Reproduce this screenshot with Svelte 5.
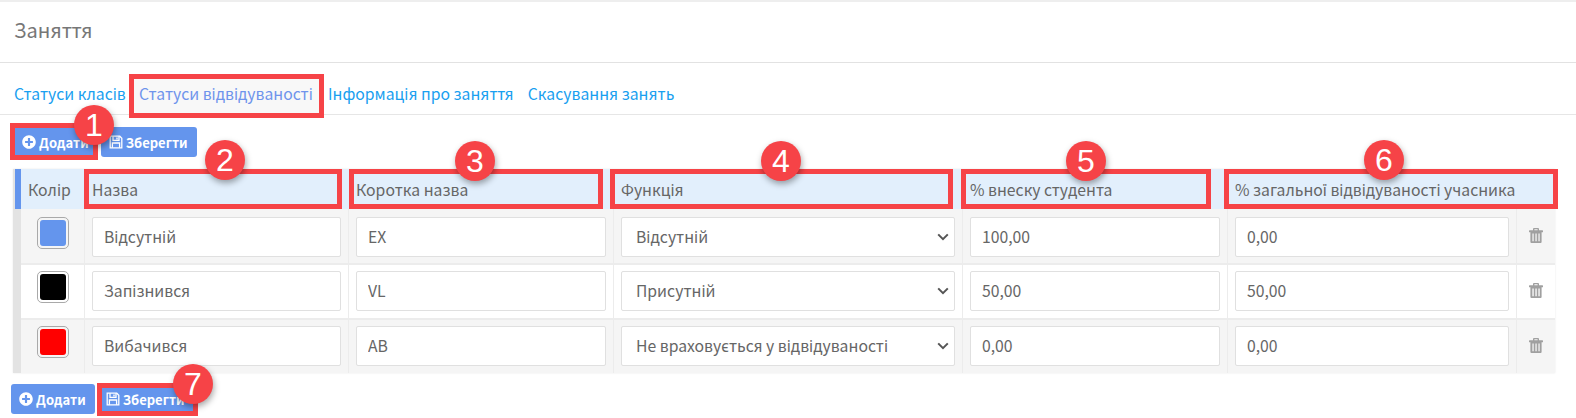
<script>
  const rows = [
    { color: '#6495ed', name: 'Відсутній', short: 'EX', fn: 'Відсутній', a: '100,00', b: '0,00' },
    { color: '#000000', name: 'Запізнився', short: 'VL', fn: 'Присутній', a: '50,00', b: '50,00' },
    { color: '#ff0000', name: 'Вибачився', short: 'AB', fn: 'Не враховується у відвідуваності', a: '0,00', b: '0,00' }
  ];
  const options = ['Відсутній', 'Присутній', 'Не враховується у відвідуваності'];
  const heads = ['Назва', 'Коротка назва', 'Функція', '% внеску студента', '% загальної відвідуваності учасника'];
  const boxes = [
    [10, 123, 88, 37], [129, 74, 195, 44], [84, 169, 258, 40], [349, 169, 254, 40],
    [610, 169, 343, 40], [961, 169, 250, 40], [1224, 169, 334, 40], [97, 383, 101, 33]
  ];
  const badges = [[94, 125], [225, 160], [475, 161], [781, 161], [1086, 161], [1384, 160], [193, 384]];
</script>

{#snippet plus()}
  <svg class="ico" viewBox="0 0 512 512"><path fill="currentColor" d="M256 8C119 8 8 119 8 256s111 248 248 248 248-111 248-248S393 8 256 8zm144 276c0 6.6-5.4 12-12 12h-92v92c0 6.6-5.4 12-12 12h-56c-6.6 0-12-5.4-12-12v-92h-92c-6.6 0-12-5.4-12-12v-56c0-6.6 5.4-12 12-12h92v-92c0-6.6 5.4-12 12-12h56c6.6 0 12 5.4 12 12v92h92c6.6 0 12 5.4 12 12v56z"/></svg>
{/snippet}
{#snippet save()}
  <svg class="ico" viewBox="0 0 14 14" fill="none" stroke="currentColor" stroke-width="1.3">
    <path d="M1.2 1.2h9.6l2 2v9.6H1.2z" />
    <path d="M4 1.2v4.2h6V1.2" />
    <path d="M3.4 12.8V8h7.2v4.8" />
    <path d="M8 2.4v2" stroke-width="1.4" />
  </svg>
{/snippet}

<div class="page">
  <header class="title">Заняття</header>

  <nav class="tabs">
    <a href="#a" class="tab first">Статуси класів</a>
    <a href="#b" class="tab active">Статуси відвідуваності</a>
    <a href="#c" class="tab info">Інформація про заняття</a>
    <a href="#d" class="tab last">Скасування занять</a>
  </nav>

  <div class="actions top">
    <button class="btn">{@render plus()}Додати</button>
    <button class="btn">{@render save()}Зберегти</button>
  </div>

  <div class="table">
    <div class="row head">
      <div class="cell">Колір</div>
      {#each heads as h}<div class="cell">{h}</div>{/each}
      <div class="cell"></div>
    </div>
    {#each rows as r}
      <div class="row body">
        <div class="cell swatch-cell">
          <span class="swatch"><span class="fill" style="background:{r.color}"></span></span>
        </div>
        <div class="cell"><input value={r.name} /></div>
        <div class="cell"><input value={r.short} /></div>
        <div class="cell">
          <div class="select-wrap">
            <select value={r.fn}>
              {#each options as o}<option value={o}>{o}</option>{/each}
            </select>
            <svg class="chev" viewBox="0 0 12 8"><path d="M1.2 1.4 6 6.2l4.8-4.8" fill="none" stroke="currentColor" stroke-width="2"/></svg>
          </div>
        </div>
        <div class="cell"><input value={r.a} /></div>
        <div class="cell"><input value={r.b} /></div>
        <div class="cell trash-cell">
          <svg class="trash" viewBox="0 0 14 15">
            <path fill="currentColor" fill-rule="evenodd" d="M4 2.2V1q0-1 1-1h4q1 0 1 1v1.2h3.4q.6 0 .6.6v1q0 .5-.5.5h-.9V14q0 1-1 1H2.4q-1 0-1-1V4.3H.5Q0 4.300 0 3.800v-1q0-.6.6-.6zm1.400 0h3.200V1.200H5.400zM3.400 5.500v7.800h1.300V5.500zm3 0v7.800h1.300V5.500zm3 0v7.800h1.300V5.500z"/>
          </svg>
        </div>
      </div>
    {/each}
  </div>

  <div class="actions bottom">
    <button class="btn">{@render plus()}Додати</button>
    <button class="btn">{@render save()}Зберегти</button>
  </div>

  {#each boxes as b}
    <span class="box" style="left:{b[0]}px;top:{b[1]}px;width:{b[2]}px;height:{b[3]}px"></span>
  {/each}
  {#each badges as c, i}
    <span class="badge" style="left:{c[0] - 20}px;top:{c[1] - 20}px">{i + 1}</span>
  {/each}
</div>

<style>
  :global(body) { margin: 0; background: #fff; overflow: hidden; }
  .page {
    position: relative;
    width: 1576px;
    height: 418px;
    overflow: hidden;
    box-sizing: border-box;
    border-top: 2px solid #eeeeee;
    font-family: "Noto Sans CJK JP", "Noto Sans", sans-serif;
    font-size: 15.75px;
    color: #666;
  }
  .title {
    height: 61px;
    box-sizing: border-box;
    border-bottom: 1px solid #e2e2e2;
    padding: 14px 0 0 14px;
    font-size: 20px;
    line-height: 28px;
    color: #777;
  }
  .tabs {
    display: flex;
    height: 52px;
    box-sizing: border-box;
    border-bottom: 1px solid #e6e6e6;
    padding: 11px 0 0 0;
  }
  .tab {
    color: #19a0f0;
    text-decoration: none;
    line-height: 40px;
    height: 40px;
    white-space: nowrap;
  }
  .tab.first { padding-left: 14px; width: 125px; box-sizing: border-box; }
  .tab.active { color: #6f94ec; background: #f8f8f8; padding: 0 8px 0 6px; margin-left: 8px; width: 187px; box-sizing: border-box; }
  .tab.info { margin-left: 8px; }
  .tab.last { margin-left: 14px; }
  .actions { display: flex; gap: 3px; }
  .actions.top { margin: 12px 0 12px 14px; }
  .actions.bottom { margin: 11px 0 0 11px; }
  .btn {
    display: inline-flex;
    align-items: center;
    gap: 3px;
    height: 30px;
    padding: 0 9px 0 8px;
    border: 0;
    border-radius: 3px;
    background: #6495ed;
    color: #fff;
    font: 700 13px "Noto Sans CJK JP", "Noto Sans", sans-serif;
  }
  .ico { width: 14px; height: 14px; flex: none; }
  .table {
    margin-left: 13px;
    width: 1542px;
    border-left: 8px solid #e3e3e3;
    box-sizing: border-box;
    box-shadow: 0 0 2px #e8e8e8;
  }
  .row {
    display: grid;
    grid-template-columns: 64px 264px 265px 349px 265px 289px 38px;
  }
  .head { height: 40px; background: #e2effc; position: relative; color: #666; }
  .head::before {
    content: "";
    position: absolute;
    left: -6px;
    top: 0;
    bottom: 0;
    width: 6px;
    background: #6495ed;
  }
  .head .cell { padding: 1px 0 0 7px; line-height: 40px; white-space: nowrap; }
  .body { height: 55px; box-sizing: border-box; background: #f5f5f5; border-top: 2px solid #ececec; }
  .body:nth-child(2) { border-top: 0; height: 54px; }
  .body:nth-child(3) { background: #fff; }
  .body .cell { padding: 6px 7px 0 7px; border-right: 1px solid #ececec; box-sizing: border-box; }
  .body:nth-child(2) .cell { padding-top: 8px; }
  .body .cell:last-child { border-right: 0; }
  input, select {
    display: block;
    width: 100%;
    height: 40px;
    box-sizing: border-box;
    border: 1px solid #e0e0e0;
    border-radius: 2px;
    background: #fff;
    padding: 0 11px 2px;
    font: 15.75px "Noto Sans CJK JP", "Noto Sans", sans-serif;
    color: #666;
    outline: none;
    margin: 0;
  }
  select { appearance: none; padding-left: 14px; }
  .select-wrap { position: relative; }
  .chev {
    position: absolute;
    right: 6px;
    top: 16px;
    width: 12px;
    height: 8px;
    color: #555;
    pointer-events: none;
  }
  .body .swatch-cell { padding: 6px 0 0 16px; }
  .body:nth-child(2) .swatch-cell { padding-top: 8px; }
  .swatch {
    display: block;
    width: 32px;
    height: 32px;
    box-sizing: border-box;
    border: 1px solid #a9a9a9;
    border-radius: 5px;
    padding: 2px;
  }
  .fill { display: block; width: 100%; height: 100%; border-radius: 3px; }
  .body .trash-cell { padding: 18px 0 0 12px; }
  .body:nth-child(2) .trash-cell { padding-top: 19px; }
  .trash { display: block; width: 14px; height: 15px; color: #a0a0a0; }
  .box {
    position: absolute;
    box-sizing: border-box;
    border: 5px solid #f64347;
    margin-top: -2px;
    pointer-events: none;
  }
  .badge {
    position: absolute;
    width: 40px;
    height: 40px;
    margin-top: -2px;
    border-radius: 50%;
    background: #f64347;
    color: #fff;
    font: 32px/40px "Liberation Sans", Arial, sans-serif;
    text-align: center;
    box-shadow: 1px 3px 6px rgba(0, 0, 0, 0.35);
  }
</style>
